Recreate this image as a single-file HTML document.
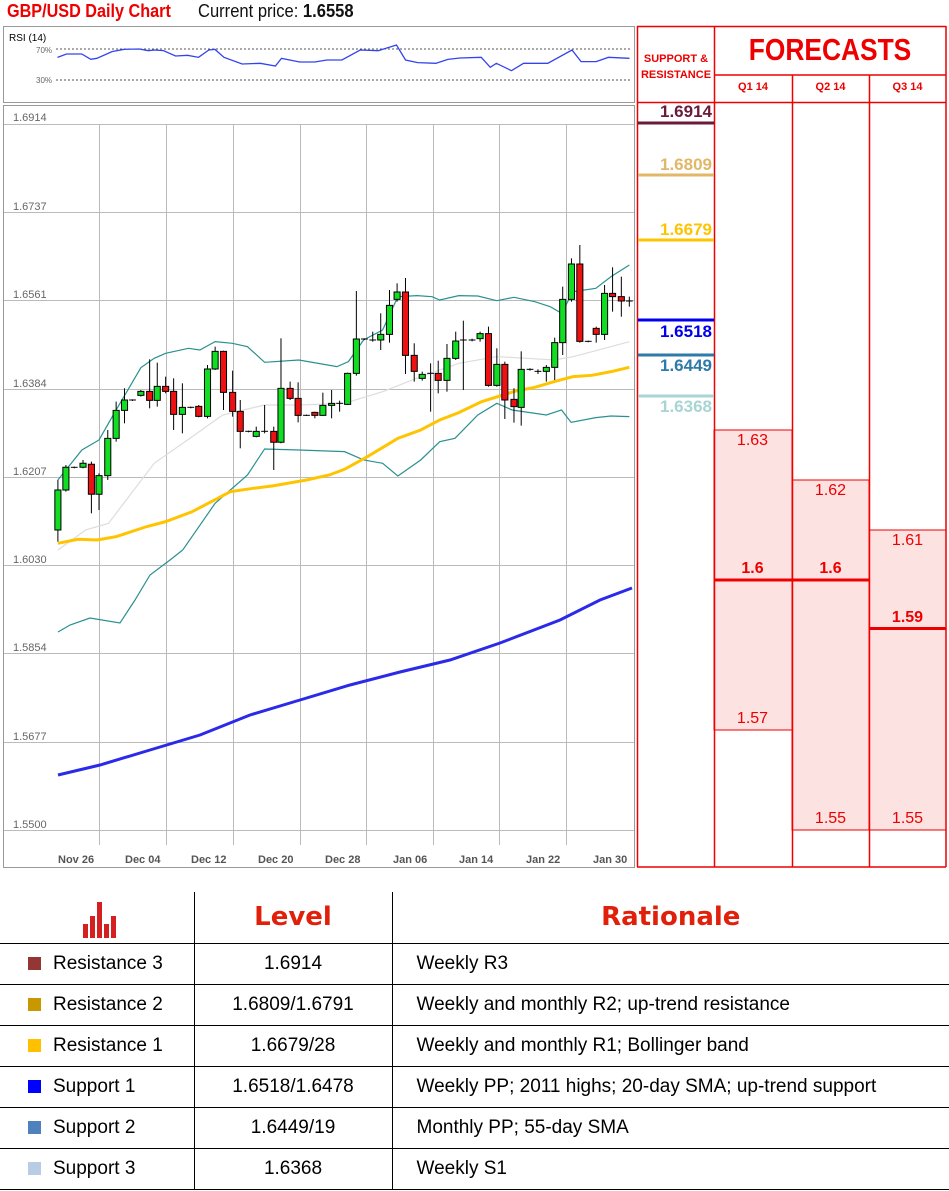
<!DOCTYPE html>
<html><head><meta charset="utf-8"><style>
*{margin:0;padding:0;box-sizing:border-box}
body{width:949px;height:1191px;background:#fff;position:relative;overflow:hidden;font-family:"Liberation Sans",sans-serif}
.a{position:absolute}
.t{font-family:"Liberation Sans Narrow","Liberation Sans",sans-serif}
.lv{position:absolute;left:637px;width:75px;text-align:right;font-weight:bold;font-size:17px;font-family:"Liberation Sans Narrow","Liberation Sans",sans-serif}
.fn{position:absolute;width:77px;text-align:center;color:#e00;font-size:16px;font-family:"Liberation Sans Narrow","Liberation Sans",sans-serif}
table{position:absolute;left:0;top:892px;width:949px;border-collapse:collapse;font-size:19px}
td{height:41px;border-top:1px solid #000;border-bottom:1px solid #000}
td+td{border-left:1px solid #000}
.h td{border-top:none;height:51px;color:#e0200a;font-weight:900;font-size:26px;text-align:center;font-family:"DejaVu Sans",sans-serif}
.sq{display:inline-block;width:13px;height:13px;margin:0 12px 0 28px;vertical-align:-1px}
</style></head><body>
<div class="a t" style="left:7px;top:1px;font-size:18px;color:#e00;font-weight:bold;transform:scaleX(0.9);transform-origin:0 0">GBP/USD Daily Chart</div>
<div class="a t" style="left:198px;top:1px;font-size:18px;color:#111;transform:scaleX(0.92);transform-origin:0 0">Current price: <b>1.6558</b></div>

<svg class="a" style="left:0;top:0" width="949" height="870">
<rect x="3.5" y="26.5" width="631" height="76" fill="#fff" stroke="#999"/>
<text x="9" y="41" font-size="10" font-family="Liberation Sans">RSI (14)</text>
<text x="36" y="53" font-size="8" fill="#666">70%</text>
<text x="36" y="83" font-size="8" fill="#666">30%</text>
<line x1="56" y1="49" x2="632" y2="49" stroke="#555" stroke-dasharray="2,2"/>
<line x1="56" y1="80" x2="632" y2="80" stroke="#555" stroke-dasharray="2,2"/>
<g transform="scale(0.6053,0.3333)"><polyline vector-effect="non-scaling-stroke" fill="none" stroke="#3344ee" stroke-width="1.3" points="95,172 110,162 135,162 150,178 160,175 185,155 205,148 230,147 245,152 255,150 270,152 290,168 310,166 328,172 345,150 355,148 370,172 400,192 430,190 455,198 465,175 495,186 520,186 540,180 565,180 595,150 625,152 655,135 670,180 690,188 720,190 740,178 760,174 795,172 810,202 820,190 845,212 865,190 905,190 945,150 960,185 985,185 1005,172 1040,175"/></g>

<rect x="3.5" y="105.5" width="631" height="762" fill="#fff" stroke="#999"/>
<g stroke="#bbb" stroke-width="1">
<line x1="4" y1="124.5" x2="634" y2="124.5"/><line x1="4" y1="212.5" x2="634" y2="212.5"/><line x1="4" y1="300.5" x2="634" y2="300.5"/><line x1="4" y1="389.5" x2="634" y2="389.5"/><line x1="4" y1="477.5" x2="634" y2="477.5"/><line x1="4" y1="565.5" x2="634" y2="565.5"/><line x1="4" y1="653.5" x2="634" y2="653.5"/><line x1="4" y1="742.5" x2="634" y2="742.5"/><line x1="4" y1="830.5" x2="634" y2="830.5"/>
<line x1="99.5" y1="124" x2="99.5" y2="845"/><line x1="166.5" y1="124" x2="166.5" y2="845"/><line x1="233.5" y1="124" x2="233.5" y2="845"/><line x1="300.5" y1="124" x2="300.5" y2="845"/><line x1="366.5" y1="124" x2="366.5" y2="845"/><line x1="433.5" y1="124" x2="433.5" y2="845"/><line x1="499.5" y1="124" x2="499.5" y2="845"/><line x1="566.5" y1="124" x2="566.5" y2="845"/>
</g>
<g font-size="11" fill="#666" font-family="Liberation Sans">
<text x="13" y="121">1.6914</text><text x="13" y="210">1.6737</text><text x="13" y="298">1.6561</text><text x="13" y="387">1.6384</text><text x="13" y="475">1.6207</text><text x="13" y="563">1.6030</text><text x="13" y="651">1.5854</text><text x="13" y="740">1.5677</text><text x="13" y="828">1.5500</text>
<g font-weight="bold" fill="#555"><text x="58" y="863">Nov 26</text><text x="125" y="863">Dec 04</text><text x="191" y="863">Dec 12</text><text x="258" y="863">Dec 20</text><text x="325" y="863">Dec 28</text><text x="393" y="863">Jan 06</text><text x="459" y="863">Jan 14</text><text x="526" y="863">Jan 22</text><text x="593" y="863">Jan 30</text></g>
</g>
<polyline fill="none" stroke="#2a2ae8" stroke-width="3" points="58,775 100,765 150,750 200,735 250,715 300,700 350,685 400,672 450,660 500,643 560,620 600,600 632,588"/>
<polyline fill="none" stroke="#2a9090" stroke-width="1.2" points="58,632 70,625 90,618 120,623 135,600 150,575 170,560 182.7,550"/>
<g transform="translate(40,230) scale(0.3807,0.3333)" fill="none">
<polyline vector-effect="non-scaling-stroke" stroke="#ddd" stroke-width="1.2" points="47,960 120,900 180,880 300,700 400,620 480,555 590,525 680,525 800,520 900,485 1000,440 1100,400 1200,380 1280,385 1350,390 1400,380 1460,362 1548,335"/>
<polyline vector-effect="non-scaling-stroke" stroke="#2a9090" stroke-width="1.2" points="47,750 110,660 155,630 200,540 265,413 300,385 330,370 390,355 420,360 460,335 505,340 545,350 590,397 680,390 780,410 810,395 850,330 900,300 940,200 990,197 1030,200 1050,210 1100,197 1150,198 1200,212 1245,202 1300,215 1340,230 1370,250 1400,185 1460,175 1500,140 1548,105"/>
<polyline vector-effect="non-scaling-stroke" stroke="#2a9090" stroke-width="1.2" points="375,960 460,820 545,735 590,657 680,660 800,665 850,690 900,700 940,738 1000,690 1050,635 1090,625 1150,555 1200,520 1240,540 1330,555 1370,540 1395,577 1460,563 1500,558 1548,560"/>
<polyline vector-effect="non-scaling-stroke" stroke="#ffc400" stroke-width="3" points="47,940 100,928 150,930 200,920 280,890 330,875 400,845 500,785 560,775 610,768 700,750 760,735 800,718 860,680 940,625 1000,600 1050,570 1100,548 1160,515 1250,483 1300,472 1350,455 1400,440 1450,436 1500,425 1548,412"/>
<g id="c" stroke="#000" stroke-width="1" vector-effect="non-scaling-stroke"></g>
</g>
</svg>
<script>
var C=[[47,780,900,'g',750,935],[68,712,780,'g',705,785],[90,712,713,'d',710,715],[113,700,712,'g',690,715],[135,703,793,'r',695,850],[155,737,793,'g',730,840],[178,625,737,'g',600,750],[200,541,625,'g',515,635],[222,510,541,'g',475,580],[243,510,511,'d',508,513],[265,484,496,'g',480,500],[288,484,511,'r',388,535],[308,469,511,'g',398,530],[330,469,484,'r',440,490],[351,484,553,'r',445,600],[374,532,553,'g',460,610],[396,532,533,'d',530,535],[417,529,559,'r',525,562],[440,417,559,'g',405,565],[460,364,417,'g',350,420],[482,364,487,'r',362,540],[506,487,544,'r',422,560],[526,544,604,'r',510,655],[548,604,605,'d',602,607],[568,604,619,'g',590,622],[590,604,605,'d',525,610],[614,604,637,'r',590,720],[633,475,637,'g',325,640],[657,475,505,'r',455,510],[678,505,556,'r',457,577],[700,556,557,'d',554,558],[722,547,556,'r',545,565],[743,526,556,'g',488,558],[766,520,526,'g',480,565],[787,520,521,'d',512,545],[808,430,523,'g',428,525],[831,327,430,'g',183,437],[852,327,328,'d',325,330],[874,330,331,'d',305,335],[895,313,330,'g',250,360],[918,226,313,'g',180,338],[938,186,208,'g',160,215],[960,186,376,'r',144,432],[983,376,424,'r',340,455],[1004,433,445,'g',425,452],[1026,430,431,'d',400,545],[1046,430,451,'r',392,490],[1069,385,451,'g',342,485],[1092,333,385,'g',305,390],[1112,330,331,'d',272,480],[1135,330,331,'d',326,334],[1156,311,326,'g',305,335],[1178,311,466,'r',290,470],[1200,403,466,'g',355,470],[1221,403,510,'r',395,567],[1245,508,530,'r',475,578],[1264,418,532,'g',364,587],[1287,418,419,'d',415,422],[1308,424,425,'d',418,432],[1330,412,424,'g',405,455],[1352,338,412,'g',323,450],[1373,208,338,'g',170,375],[1396,102,208,'g',85,215],[1418,102,334,'r',45,338],[1440,334,335,'d',332,337],[1461,295,313,'r',290,338],[1483,190,313,'g',165,330],[1504,190,200,'r',112,245],[1527,200,213,'r',140,260],[1548,213,214,'d',200,230]];
var s='';C.forEach(function(c){var x=c[0];s+='<line vector-effect="non-scaling-stroke" x1="'+x+'" x2="'+x+'" y1="'+c[4]+'" y2="'+c[5]+'"/>';
if(c[3]=='d')s+='<line vector-effect="non-scaling-stroke" x1="'+(x-9)+'" x2="'+(x+9)+'" y1="'+c[1]+'" y2="'+c[1]+'"/>';
else s+='<rect vector-effect="non-scaling-stroke" x="'+(x-8)+'" y="'+c[1]+'" width="16" height="'+(c[2]-c[1])+'" fill="'+(c[3]=='g'?'#11dd22':'#ee1111')+'"/>';});
document.getElementById('c').innerHTML=s;
</script>

<svg class="a" style="left:0;top:0" width="949" height="870">
<rect x="714" y="430" width="78" height="300" fill="#fde2e2" stroke="#e00"/>
<rect x="792" y="480" width="77" height="350" fill="#fde2e2" stroke="#e00"/>
<rect x="869" y="530" width="77" height="300" fill="#fde2e2" stroke="#e00"/>
<g stroke="#e00" stroke-width="1.5" fill="none">
<line x1="637.5" y1="26" x2="637.5" y2="867"/><line x1="714.5" y1="26" x2="714.5" y2="867"/><line x1="792.5" y1="75" x2="792.5" y2="867"/><line x1="869.5" y1="75" x2="869.5" y2="867"/><line x1="946" y1="26" x2="946" y2="867"/>
<line x1="637" y1="26.5" x2="946" y2="26.5"/><line x1="714" y1="75" x2="946" y2="75"/><line x1="637" y1="102.5" x2="946" y2="102.5"/><line x1="637" y1="867" x2="946" y2="867"/>
</g>
<line x1="714" y1="580" x2="869" y2="580" stroke="#e00" stroke-width="3"/>
<line x1="869" y1="628.5" x2="946" y2="628.5" stroke="#e00" stroke-width="3"/>
<g stroke-width="3"><line x1="638" y1="123" x2="714" y2="123" stroke="#6b1a3a"/><line x1="638" y1="175" x2="714" y2="175" stroke="#e0b868"/><line x1="638" y1="240" x2="714" y2="240" stroke="#ffc400"/><line x1="638" y1="320" x2="714" y2="320" stroke="#0000ee"/><line x1="638" y1="355" x2="714" y2="355" stroke="#2e7aa8"/><line x1="638" y1="396" x2="714" y2="396" stroke="#a8d4d4"/></g>
</svg>
<div class="a t" style="left:638px;top:51px;width:76px;text-align:center;color:#e00;font-size:11px;font-weight:bold;line-height:16px">SUPPORT &amp;<br>RESISTANCE</div>
<div class="a t" style="left:714px;top:32px;width:232px;text-align:center;color:#e00;font-size:31px;font-weight:bold;transform:scaleX(0.85)">FORECASTS</div>
<div class="a t" style="left:714px;top:81px;width:78px;text-align:center;color:#e00;font-size:11px;font-weight:bold">Q1 14</div>
<div class="a t" style="left:792px;top:81px;width:77px;text-align:center;color:#e00;font-size:11px;font-weight:bold">Q2 14</div>
<div class="a t" style="left:869px;top:81px;width:77px;text-align:center;color:#e00;font-size:11px;font-weight:bold">Q3 14</div>
<div class="lv" style="top:102px;color:#6b1a3a">1.6914</div>
<div class="lv" style="top:155px;color:#e0b868">1.6809</div>
<div class="lv" style="top:220px;color:#ffc400">1.6679</div>
<div class="lv" style="top:322px;color:#0000ee">1.6518</div>
<div class="lv" style="top:356px;color:#2e7aa8">1.6449</div>
<div class="lv" style="top:397px;color:#a8d4d4">1.6368</div>
<div class="fn" style="left:714px;top:432px">1.63</div>
<div class="fn" style="left:714px;top:560px;font-weight:bold">1.6</div>
<div class="fn" style="left:714px;top:710px">1.57</div>
<div class="fn" style="left:792px;top:482px">1.62</div>
<div class="fn" style="left:792px;top:560px;font-weight:bold">1.6</div>
<div class="fn" style="left:792px;top:810px">1.55</div>
<div class="fn" style="left:869px;top:532px">1.61</div>
<div class="fn" style="left:869px;top:609px;font-weight:bold">1.59</div>
<div class="fn" style="left:869px;top:810px">1.55</div>

<svg class="a" style="left:80px;top:900px" width="40" height="40"><g fill="#d42020"><rect x="3" y="24" width="5" height="14"/><rect x="10" y="16" width="5" height="22"/><rect x="17" y="2" width="5" height="36"/><rect x="24" y="24" width="5" height="14"/><rect x="31" y="16" width="5" height="22"/></g></svg>
<table>
<colgroup><col style="width:194px"><col style="width:198px"><col></colgroup>
<tr class="h"><td></td><td>Level</td><td>Rationale</td></tr>
<tr><td><span class="sq" style="background:#943634"></span>Resistance 3</td><td style="text-align:center">1.6914</td><td style="padding-left:24px">Weekly R3</td></tr>
<tr><td><span class="sq" style="background:#c89800"></span>Resistance 2</td><td style="text-align:center">1.6809/1.6791</td><td style="padding-left:24px">Weekly and monthly R2; up-trend resistance</td></tr>
<tr><td><span class="sq" style="background:#ffc000"></span>Resistance 1</td><td style="text-align:center">1.6679/28</td><td style="padding-left:24px">Weekly and monthly R1; Bollinger band</td></tr>
<tr><td><span class="sq" style="background:#0000ff"></span>Support 1</td><td style="text-align:center">1.6518/1.6478</td><td style="padding-left:24px">Weekly PP; 2011 highs; 20-day SMA; up-trend support</td></tr>
<tr><td><span class="sq" style="background:#4f81bd"></span>Support 2</td><td style="text-align:center">1.6449/19</td><td style="padding-left:24px">Monthly PP; 55-day SMA</td></tr>
<tr><td><span class="sq" style="background:#b8cce4"></span>Support 3</td><td style="text-align:center">1.6368</td><td style="padding-left:24px">Weekly S1</td></tr>
</table>
</body></html>
